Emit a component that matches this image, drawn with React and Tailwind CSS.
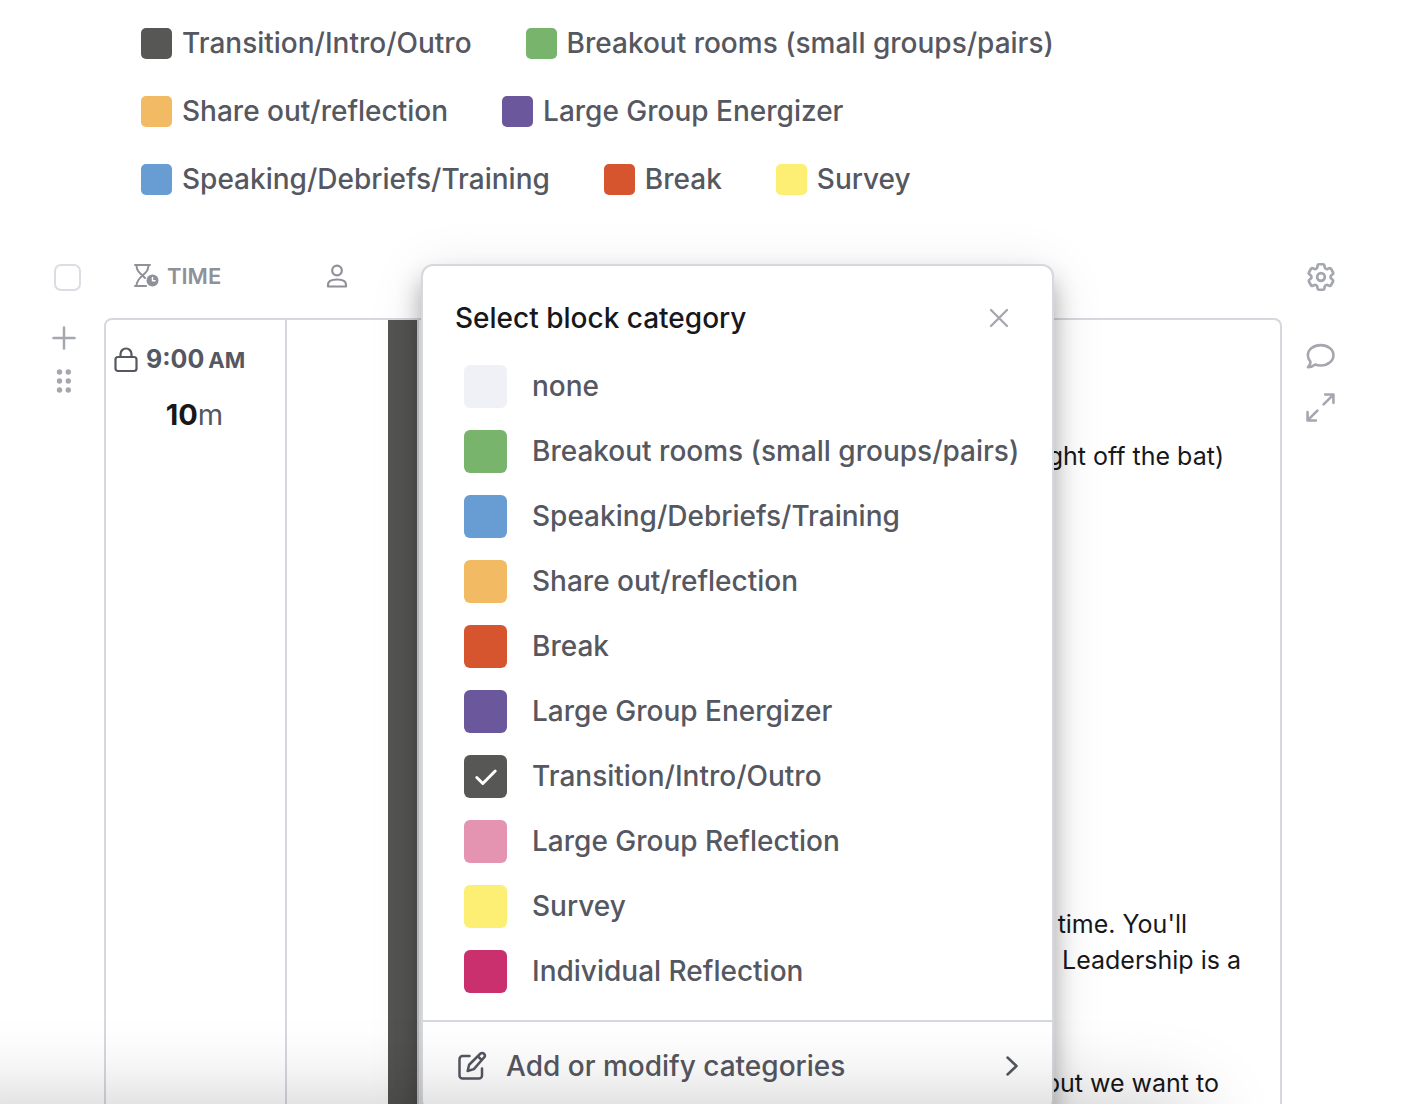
import clsx from 'clsx';

const legend = [
  { id: 'transition', label: 'Transition/Intro/Outro', color: 'bg-[#575855]' },
  { id: 'breakout', label: 'Breakout rooms (small groups/pairs)', color: 'bg-[#79b46d]' },
  { id: 'share', label: 'Share out/reflection', color: 'bg-[#f1ba63]' },
  { id: 'energizer', label: 'Large Group Energizer', color: 'bg-[#6b579c]' },
  { id: 'speaking', label: 'Speaking/Debriefs/Training', color: 'bg-[#689dd3]' },
  { id: 'break', label: 'Break', color: 'bg-[#d6552f]' },
  { id: 'survey', label: 'Survey', color: 'bg-[#fdee74]' },
];

const categories = [
  { id: 'none', label: 'none', color: 'bg-[#f0f1f6]' },
  { id: 'breakout', label: 'Breakout rooms (small groups/pairs)', color: 'bg-[#79b46d]' },
  { id: 'speaking', label: 'Speaking/Debriefs/Training', color: 'bg-[#689dd3]' },
  { id: 'share', label: 'Share out/reflection', color: 'bg-[#f1ba63]' },
  { id: 'break', label: 'Break', color: 'bg-[#d6552f]' },
  { id: 'energizer', label: 'Large Group Energizer', color: 'bg-[#6b579c]' },
  { id: 'transition', label: 'Transition/Intro/Outro', color: 'bg-[#575855]' },
  { id: 'reflection', label: 'Large Group Reflection', color: 'bg-[#e494b1]' },
  { id: 'survey', label: 'Survey', color: 'bg-[#fdee74]' },
  { id: 'individual', label: 'Individual Reflection', color: 'bg-[#c9306d]' },
];

function Icon({ size = 28, box = 28, width = 2, className, children }) {
  return (
    <svg
      width={size}
      height={size}
      viewBox={`0 0 ${box} ${box}`}
      fill="none"
      stroke="currentColor"
      strokeWidth={width}
      strokeLinecap="round"
      strokeLinejoin="round"
      className={clsx('shrink-0', className)}
      aria-hidden="true"
    >
      {children}
    </svg>
  );
}

function Legend() {
  return (
    <ul className="flex flex-wrap gap-x-[54px] pt-[9px] pr-[130px] pl-[141px]">
      {legend.map((item) => (
        <li key={item.id} className="flex h-[68px] items-center gap-[10px]">
          <span className={clsx('size-[31px] rounded-[5px]', item.color)} />
          <span className="text-[28px] leading-9 font-medium">{item.label}</span>
        </li>
      ))}
    </ul>
  );
}

function PlannerHeader() {
  return (
    <div className="grid h-[82px] grid-cols-[104px_182px_102px_1fr_130px] items-center text-[#8f9098]">
      <input
        type="checkbox"
        aria-label="Select all blocks"
        className="ml-[54px] size-[27px] appearance-none rounded-[7px] border-2 border-[#dadde2]"
      />
      <div className="flex items-center gap-2 pb-0.5 pl-[29px]">
        <Icon size={26} box={26} width={2}>
          <path d="M2 2h15M3.500 2c0 5.500 2.500 7.500 6 10.500M15.500 2c0 5.500-2.500 7.500-6 10.500-3.500 3-6 5.500-6 10.500M9.500 12.500l2.500 2.500M2 23h11" />
          <circle cx="19.500" cy="17.500" r="6" fill="currentColor" stroke="none" />
          <path d="M19.500 14.500v3.300h2.500" stroke="white" strokeWidth="1.500" />
        </Icon>
        <span className="text-[22px] leading-7 font-semibold">TIME</span>
      </div>
      <div className="pb-0.5 pl-[39px]">
        <Icon size={24} box={24} width={2.200}>
          <circle cx="12" cy="6.500" r="4.800" />
          <path d="M3 22.500v-2c0-3.500 4-5 9-5s9 1.500 9 5v2z" />
        </Icon>
      </div>
      <span />
      <button type="button" aria-label="Settings" className="pl-[22px] text-[#a5a7ae]">
        <Icon size={34} box={24} width={1.900}>
          <path d="M9.594 3.940c.09-.542.56-.94 1.110-.94h2.593c.55 0 1.020.398 1.110.94l.213 1.281c.063.374.313.686.645.87.074.04.147.083.22.127.325.196.72.257 1.075.124l1.217-.456a1.125 1.125 0 0 1 1.370.49l1.296 2.247a1.125 1.125 0 0 1-.26 1.431l-1.003.827c-.293.241-.438.613-.43.992a7.723 7.723 0 0 1 0 .255c-.008.378.137.75.43.991l1.004.827c.424.35.534.955.26 1.430l-1.298 2.247a1.125 1.125 0 0 1-1.369.491l-1.217-.456c-.355-.133-.75-.072-1.076.124a6.470 6.470 0 0 1-.22.128c-.331.183-.581.495-.644.869l-.213 1.281c-.09.543-.56.94-1.110.94h-2.594c-.55 0-1.019-.398-1.110-.94l-.213-1.281c-.062-.374-.312-.686-.644-.87a6.520 6.520 0 0 1-.22-.127c-.325-.196-.72-.257-1.076-.124l-1.217.456a1.125 1.125 0 0 1-1.369-.49l-1.297-2.247a1.125 1.125 0 0 1 .26-1.431l1.004-.827c.292-.24.437-.613.43-.991a6.932 6.932 0 0 1 0-.255c.007-.38-.138-.751-.43-.992l-1.004-.827a1.125 1.125 0 0 1-.26-1.430l1.297-2.247a1.125 1.125 0 0 1 1.370-.491l1.216.456c.356.133.751.072 1.076-.124.072-.044.146-.086.22-.128.332-.183.582-.495.644-.869l.214-1.280z" />
          <circle cx="12" cy="12" r="2.700" />
        </Icon>
      </button>
    </div>
  );
}

function BlockRow() {
  return (
    <div className="grid min-h-[800px] grid-cols-[104px_1fr_130px] text-[#a5a7ae]">
      <div className="flex flex-col items-start gap-[19px] pt-[8px] pl-[52px]">
        <button type="button" aria-label="Add block">
          <Icon size={24} box={24} width={2.500}>
            <path d="M12 1.500v21M1.500 12h21" />
          </Icon>
        </button>
        <button type="button" aria-label="Move block">
          <Icon size={24} box={24} className="fill-current stroke-none">
            <circle cx="7.500" cy="3" r="2.700" />
            <circle cx="16.300" cy="3" r="2.700" />
            <circle cx="7.500" cy="12" r="2.700" />
            <circle cx="16.300" cy="12" r="2.700" />
            <circle cx="7.500" cy="21" r="2.700" />
            <circle cx="16.300" cy="21" r="2.700" />
          </Icon>
        </button>
      </div>

      <div className="grid grid-cols-[181px_101px_31px_1fr] rounded-t-lg border-2 border-b-0 border-[#d5d8dd]">
        <div className="border-r-2 border-[#d5d8dd] pt-[21px]">
          <div className="flex items-center gap-[7px] pl-[7px] text-[#555761]">
            <Icon size={26} box={26} width={2.200}>
              <rect x="2.500" y="10" width="21" height="14" rx="2.500" />
              <path d="M7.500 10V7a5.500 5.500 0 0 1 11 0v3" />
            </Icon>
            <span className="text-[25px] leading-9 font-bold">
              9:00<span className="ml-1 text-[22px]">AM</span>
            </span>
          </div>
          <p className="mt-[19px] pr-0.5 text-center text-[29px] leading-9 text-[#555761]">
            <span className="font-bold text-[#17181c]">10</span>m
          </p>
        </div>
        <div />
        <div className="border-r-2 border-[#d5d8dd] bg-[#545452]" />
        <div className="flex flex-col items-end text-[25px] leading-9 text-[#17181c]">
          <p className="pt-[118px] pr-[56px]">right off the bat)</p>
          <p className="pt-[432px] pr-[93px]">time. You'll</p>
          <p className="pr-[39px]">. Leadership is a</p>
          <p className="pt-[87px] pr-[61px]">but we want to</p>
        </div>
      </div>

      <div className="flex flex-col items-start gap-[22px] pt-6 pl-6">
        <button type="button" aria-label="Comments">
          <Icon size={29} box={28} width={2.500}>
            <path d="M14.200 3c6.800 0 12.300 4.300 12.300 9.800s-5.500 9.900-12.300 9.900c-1.900 0-3.700-.3-5.300-.9-1.700 1.500-4.200 2.500-7 2.600 1.500-1.400 2.600-3.200 2.300-5.500-1.500-1.700-2.400-3.800-2.400-6.100C1.800 7.300 7.400 3 14.200 3z" />
          </Icon>
        </button>
        <button type="button" aria-label="Expand">
          <Icon size={29} box={28} width={2.500}>
            <path d="M18.500 1.500h8v8M26.500 1.500 17 11M9.500 26.500h-8v-8M1.500 26.500 11 17" />
          </Icon>
        </button>
      </div>
    </div>
  );
}

function CategoryDialog() {
  return (
    <section
      role="dialog"
      aria-labelledby="category-title"
      className="absolute top-[264px] left-[421px] w-[633px] rounded-xl border-2 border-[#d5d8dd] bg-white shadow-[0_8px_56px_rgba(0,0,0,0.1),0_16px_24px_rgba(0,0,0,0.3)]"
    >
      <header className="flex h-[88px] items-center justify-between pt-4 pr-[43px] pl-8">
        <h2 id="category-title" className="text-[28px] leading-9 font-medium text-[#17181c]">
          Select block category
        </h2>
        <button type="button" aria-label="Close" className="text-[#a5a7ae]">
          <Icon size={20} box={20} width={2.300}>
            <path d="m2 2 16 16M18 2 2 18" />
          </Icon>
        </button>
      </header>

      <div role="radiogroup" aria-labelledby="category-title" className="pb-4">
        {categories.map((category) => (
          <label key={category.id} className="flex h-[65px] items-center gap-[25px] pl-[41px]">
            <span className="grid size-[43px] place-items-center">
              <input
                type="radio"
                name="category"
                defaultChecked={category.id === 'transition'}
                className={clsx('peer col-start-1 row-start-1 size-[43px] appearance-none rounded-md', category.color)}
              />
              <Icon
                size={24}
                box={24}
                width={3}
                className="pointer-events-none invisible col-start-1 row-start-1 text-white peer-checked:visible"
              >
                <path d="m2.800 12.500 6 6L21.200 6" />
              </Icon>
            </span>
            <span className="pb-0.5 text-[28px] leading-9 font-medium">{category.label}</span>
          </label>
        ))}
      </div>

      <button
        type="button"
        className="flex h-[90px] w-full items-center gap-[19px] border-t-2 border-[#d5d8dd] pr-8 pl-[34px]"
      >
        <Icon size={30} box={24} width={2}>
          <path d="M10 4H4.500A2.500 2.500 0 0 0 2 6.500v13A2.500 2.500 0 0 0 4.500 22h13a2.500 2.500 0 0 0 2.500-2.500V14" />
          <path d="M18.600 2.200a2.100 2.100 0 0 1 3 3L13.500 14.500 8.500 16l1.200-5zM17 4.500l2.700 2.700" />
        </Icon>
        <span className="text-[28px] leading-9 font-medium">Add or modify categories</span>
        <Icon size={24} box={24} width={2.500} className="ml-auto">
          <path d="m11.500 3.500 9 8.500-9 8.500" />
        </Icon>
      </button>
    </section>
  );
}

export default function App() {
  return (
    <main className="relative h-screen overflow-hidden bg-white font-['Inter',sans-serif] text-[#555761]">
      <Legend />
      <div className="pt-[23px]">
        <PlannerHeader />
        <BlockRow />
      </div>
      <CategoryDialog />
      {/* soft shade cast by the bottom edge */}
      <div className="pointer-events-none absolute top-full right-[220px] -left-24 h-24 shadow-[0_0_84px_rgba(0,0,0,0.22)]" />
    </main>
  );
}
